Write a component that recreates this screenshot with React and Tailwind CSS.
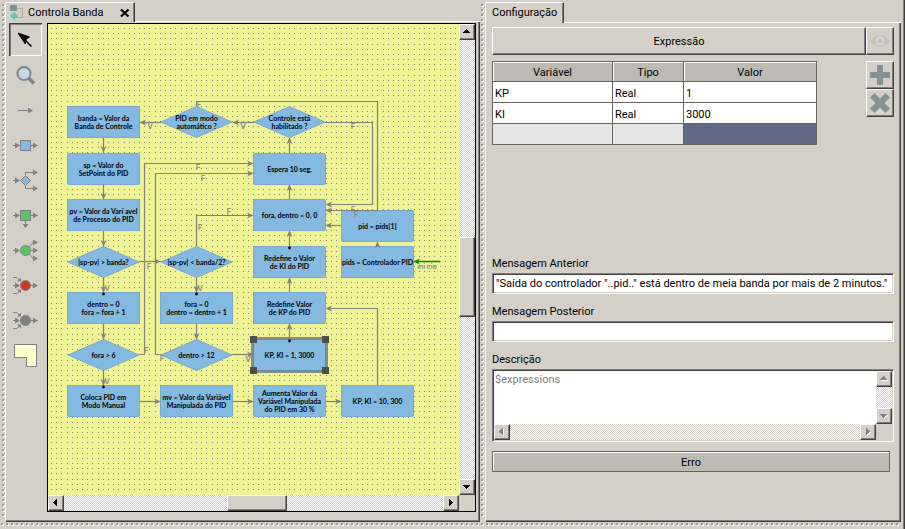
import React from "react";

const ORIGIN_X = 48;
const ORIGIN_Y = 24;

const NODES = [
  { x: 67, y: 106, lines: ["banda = Valor da", "Banda de Controle"] },
  { x: 160, y: 106, diamond: true, lines: ["PID em modo", "automático ?"] },
  { x: 253, y: 106, diamond: true, lines: ["Controle está", "habilitado ?"] },
  { x: 67, y: 153, lines: ["sp = Valor do", "SetPoint do PID"] },
  { x: 253, y: 153, lines: ["Espera 10 seg."] },
  { x: 67, y: 199, lines: ["pv = Valor da Varí avel", "de Processo do PID"] },
  { x: 253, y: 199, lines: ["fora, dentro = 0, 0"] },
  { x: 341, y: 210, lines: ["pid = pids[1]"] },
  { x: 67, y: 246, diamond: true, lines: ["|sp-pv| > banda?"] },
  { x: 160, y: 246, diamond: true, lines: ["|sp-pv| < banda/2?"] },
  { x: 253, y: 246, lines: ["Redefine o Valor", "de KI do PID"] },
  { x: 341, y: 246, lines: ["pids = Controlador PID"] },
  { x: 67, y: 292, lines: ["dentro = 0", "fora = fora + 1"] },
  { x: 160, y: 292, lines: ["fora = 0", "dentro = dentro + 1"] },
  { x: 253, y: 292, lines: ["Redefine Valor", "de KP do PID"] },
  { x: 67, y: 339, diamond: true, lines: ["fora > 6"] },
  { x: 160, y: 339, diamond: true, lines: ["dentro > 12"] },
  { x: 253, y: 339, selected: true, lines: ["KP, KI = 1, 3000"] },
  { x: 67, y: 385, lines: ["Coloca PID em", "Modo Manual"] },
  { x: 160, y: 385, lines: ["mv = Valor da Variável", "Manipulada do PID"] },
  { x: 253, y: 385, lines: ["Aumenta Valor da", "Variável Manipulada", "do PID em 30 %"] },
  { x: 341, y: 385, lines: ["KP, KI = 10, 300"] },
];

const EDGES = [
  "M103.5 138V152", "M103.5 185V199", "M103.5 231V246", "M103.5 278V292", "M103.5 324V339", "M103.5 370V385",
  "M196.5 278V292", "M196.5 324V339",
  "M140 401.5H160", "M233 401.5H253", "M326 401.5H341",
  "M377.5 385V308.5H326",
  "M289.5 339V324", "M289.5 292V278", "M289.5 246V231", "M289.5 199V185", "M289.5 153V138",
  "M254 122.5H233", "M161 122.5H140",
  "M196.5 106V101.5H377.5V210.5H326",
  "M325 122.5H372.5V204.5H326",
  "M139 261.5H160",
  "M196.5 246V215.5H253",
  "M139 354.5H144.5V163.5H253",
  "M161 354.5H155.5V173.5H253",
  "M233 354.5H253",
  "M341 225.5H326",
  "M377.5 246V242",
];

const EDGE_LABELS = [
  ["F", 199, 107], ["V", 150, 129], ["V", 243, 129], ["F", 353, 129],
  ["F", 198, 170], ["F", 203, 181], ["F", 353, 212], ["F", 356, 217],
  ["F", 229, 214], ["F", 200, 230], ["F", 149, 269], ["V", 107, 291],
  ["V", 200, 291], ["F", 146, 353], ["F", 162, 361], ["V", 248, 362], ["V", 107, 384],
];

const PORTS = [[103.5, 294], [196.5, 294], [289.5, 248], [289.5, 341], [103.5, 387]];

const GRID_STEP = 5.18;
const GRID_PATH = (() => {
  let d = "";
  for (let r = 0; r < 90; r++) {
    for (let c = 0; c < 79; c++) {
      d += `M${Math.round(51 + c * GRID_STEP)} ${Math.round(28 + r * GRID_STEP)}h1v1h-1z`;
    }
  }
  return d;
})();

const raised =
  "border border-t-white border-l-white border-r-[#404040] border-b-[#404040] shadow-[inset_-1px_-1px_0_#808080] bg-[#d4d0c8]";
const sunken =
  "border border-t-[#808080] border-l-[#808080] border-r-white border-b-white shadow-[inset_1px_1px_0_#404040,inset_-1px_-1px_0_#d4d0c8] bg-white";
const trough =
  "bg-[repeating-conic-gradient(#ffffff_0_25%,#d4d0c8_0_50%)] bg-[length:2px_2px]";
const gripDots =
  "bg-[conic-gradient(from_270deg_at_2px_2px,#999999_90deg,transparent_0),conic-gradient(from_270deg_at_2px_2px,#ffffff_90deg,transparent_0)] bg-[length:5px_5px] bg-[position:0_0,1px_1px]";

const TRIANGLES = {
  up: "M4 9h7v-1h-1v-1h-1v-1h-1v-1h-1v1h-1v1h-1v1h-1z",
  down: "M4 6h7v1h-1v1h-1v1h-1v1h-1v-1h-1v-1h-1v-1h-1z",
  left: "M9 4v7h-1v-1h-1v-1h-1v-1h-1v-1h1v-1h1v-1h1v-1z",
  right: "M6 4v7h1v-1h1v-1h1v-1h1v-1h-1v-1h-1v-1h-1v-1z",
};

function ScrollButton({ dir, label, disabled }) {
  return (
    <button type="button" aria-label={label} disabled={disabled} className={`size-4 shrink-0 ${raised}`}>
      <svg viewBox="0 0 14 14" className="size-3.5" shapeRendering="crispEdges">
        {disabled && <path d={TRIANGLES[dir]} fill="#fff" />}
        <path d={TRIANGLES[dir]} fill={disabled ? "#808080" : "#000"} transform="translate(-1 -1)" />
      </svg>
    </button>
  );
}

function Node({ node }) {
  return (
    <div
      className="absolute flex h-8 w-[73px] items-center justify-center"
      style={{ left: node.x - ORIGIN_X, top: node.y - ORIGIN_Y }}
    >
      {node.diamond ? (
        <svg viewBox="0 0 73 32" className="absolute inset-0 size-full">
          <path d="M1 16L36.5 0.5L72 16L36.5 31.5Z" fill="#84b9e2" stroke="#79a9cc" />
        </svg>
      ) : (
        <div
          className={`absolute inset-0 rounded-xs bg-[#84b9e2] ${
            node.selected ? "outline-3 -outline-offset-1 outline-[#67788a]/80" : "border border-[#79a9cc]"
          }`}
        />
      )}
      {node.selected && (
        <div className="absolute -inset-[3px] grid grid-cols-2 content-between justify-between">
          <i className="size-[7px] bg-[#4c5049]" />
          <i className="size-[7px] justify-self-end bg-[#4c5049]" />
          <i className="size-[7px] bg-[#4c5049]" />
          <i className="size-[7px] justify-self-end bg-[#4c5049]" />
        </div>
      )}
      <div className="relative text-center font-[Lato,sans-serif] text-[7px] leading-[8px] font-bold whitespace-nowrap text-black">
        {node.lines.map((line) => (
          <div key={line}>{line}</div>
        ))}
      </div>
    </div>
  );
}

function Diagram() {
  return (
    <div className="relative min-h-0 min-w-0 overflow-hidden bg-[#eff295]">
      <svg viewBox="48 24 411 470" className="absolute top-0 left-0 h-[470px] w-[411px]">
        <path d={GRID_PATH} fill="#8c8c6c" shapeRendering="crispEdges" />
      </svg>
      {NODES.map((n) => (
        <Node key={`${n.x}-${n.y}`} node={n} />
      ))}
      <svg viewBox="48 24 411 470" className="pointer-events-none absolute top-0 left-0 h-[470px] w-[411px]">
        <defs>
          <marker id="head" markerUnits="userSpaceOnUse" markerWidth="7" markerHeight="7" refX="6" refY="3.5" orient="auto">
            <path d="M0 0.5L6.5 3.5L0 6.5L1.8 3.5Z" fill="#85817a" />
          </marker>
          <marker id="startHead" markerUnits="userSpaceOnUse" markerWidth="7" markerHeight="7" refX="6" refY="3.5" orient="auto">
            <path d="M0 0.5L6.5 3.5L0 6.5L1.8 3.5Z" fill="#0c8a0c" />
          </marker>
        </defs>
        {EDGES.map((d) => (
          <path key={d} d={d} fill="none" stroke="#85817a" strokeWidth="1.2" markerEnd="url(#head)" />
        ))}
        <path d="M440 261.5H414" stroke="#0c8a0c" strokeWidth="1.5" markerEnd="url(#startHead)" />
        {PORTS.map(([x, y]) => (
          <circle key={`${x}-${y}`} cx={x} cy={y} r="1.4" fill="#000" />
        ))}
        <g className="fill-[#85817a] font-[Inter,sans-serif] text-[8px] font-medium" textAnchor="middle">
          {EDGE_LABELS.map(([t, x, y]) => (
            <text key={`${x}-${y}`} x={x} y={y}>{t}</text>
          ))}
          <text x="427" y="269" className="text-[7px]">iní cio</text>
        </g>
      </svg>
    </div>
  );
}

const G = "#808080";
const arrow = (x, y) => `M${x - 4} ${y - 3}L${x + 1} ${y}L${x - 4} ${y + 3}Z`;

const TOOLS = [
  {
    label: "Selecionar",
    icon: (
      <>
        <path d="M9 9L20.5 13L17.3 15L16.3 20Z" fill="#000" stroke="#000" />
        <path d="M15 15L22.5 22.5" stroke="#000" strokeWidth="1.5" />
      </>
    ),
  },
  {
    label: "Zoom",
    icon: (
      <>
        <path d="M19.5 19L25 24.5" stroke="#7b8790" strokeWidth="3.6" />
        <circle cx="15" cy="14.5" r="6.5" fill="#ccd5de" stroke="#7b8790" strokeWidth="2" />
      </>
    ),
  },
  { label: "Conexão", icon: <><path d="M9 16.5H22" stroke={G} /><path d={arrow(23, 16.5)} fill={G} /></> },
  {
    label: "Ação",
    icon: (
      <>
        <path d="M4 16.5H10M21 16.5H27" stroke={G} />
        <path d={`${arrow(10, 16.5)}${arrow(28, 16.5)}`} fill={G} />
        <rect x="11.5" y="11.5" width="10" height="10" fill="#84b9e2" stroke={G} />
      </>
    ),
  },
  {
    label: "Decisão",
    icon: (
      <>
        <path d="M4 16.5H10M16.5 11V8.5H27M16.5 22V24.5H27" stroke={G} fill="none" />
        <path d={`${arrow(10, 16.5)}${arrow(28, 8.5)}${arrow(28, 24.5)}`} fill={G} />
        <path d="M11.5 16.5L16.5 11.5L21.5 16.5L16.5 21.5Z" fill="#84b9e2" stroke={G} />
      </>
    ),
  },
  {
    label: "Processo",
    icon: (
      <>
        <path d="M4 16.5H10M21 16.5H27M16.5 22V27" stroke={G} />
        <path d={`${arrow(10, 16.5)}${arrow(28, 16.5)}M13.5 25H19.5L16.5 29Z`} fill={G} />
        <rect x="11.5" y="11.5" width="10" height="10" fill="#56c667" stroke={G} />
      </>
    ),
  },
  {
    label: "Bifurcação",
    icon: (
      <>
        <path d="M4 16.5H10M21 16.5H27M20 13L24 8.5H27M20 20L24 24.5H27" stroke={G} fill="none" />
        <path d={`${arrow(10, 16.5)}${arrow(28, 16.5)}${arrow(28, 8.5)}${arrow(28, 24.5)}`} fill={G} />
        <circle cx="16.5" cy="16.5" r="5" fill="#56c667" stroke={G} />
      </>
    ),
  },
  ...[["Junção", "#d03a24"], ["Fim", "#808080"]].map(([label, color]) => ({
    label,
    icon: (
      <>
        <path d="M4 16.5H10M21 16.5H27M4 8.5H8L11 12M4 24.5H8L11 21" stroke={G} fill="none" />
        <path d={`${arrow(10, 16.5)}${arrow(28, 16.5)}M12 8.5V12.5H8ZM12 24.5V20.5H8Z`} fill={G} />
        <circle cx="16.5" cy="16.5" r="5" fill={color} stroke={G} />
      </>
    ),
  })),
  { label: "Nota", icon: <path d="M5.5 5.5H27.5V27.5H17.5V18.5H5.5Z" fill="#ffffcc" stroke={G} /> },
];

function Toolbar() {
  return (
    <nav aria-label="Ferramentas" className="flex w-[41px] shrink-0 flex-col gap-[3px] pt-px pl-[3px]">
      {TOOLS.map((tool, i) => (
        <button
          key={tool.label}
          type="button"
          aria-label={tool.label}
          className={`shrink-0 ${
            i === 0
              ? "size-[33px] shadow-[inset_1px_1px_0_#404040,inset_2px_2px_0_#808080,inset_-1px_-1px_0_#ffffff]"
              : "size-8"
          }`}
        >
          <svg viewBox="0 0 32 32" className="size-8" fill="none">{tool.icon}</svg>
        </button>
      ))}
    </nav>
  );
}

function TabHeader({ children, className }) {
  return (
    <div className={`flex ${className}`}>
      <div className="flex items-center rounded-tl-xs border-t border-r border-l border-white border-r-[#404040] shadow-[inset_-1px_0_0_#808080]">
        {children}
      </div>
      <div className="flex-1 border-b border-white" />
    </div>
  );
}

const panelEdge =
  "border-r border-b border-l border-l-white border-r-[#404040] border-b-[#404040] shadow-[inset_-1px_-1px_0_#808080]";

function EditorPanel() {
  return (
    <section className="flex min-h-0 min-w-0 flex-col">
      <TabHeader className="h-5 shrink-0">
        <div className="flex items-center pr-[2px] pl-[4px]">
          <svg viewBox="0 0 16 16" className="size-4" fill="none">
            <path d="M6.5 3.5H12.5V12.5H5.5" stroke="#a9a9a5" />
            <rect x="0" y="0" width="7" height="6" fill="#7f918f" />
            <path d="M4 7L8 11L4 15L0 11Z" fill="#5bc8b8" />
          </svg>
          <span className="ml-[2px] pt-[2px]">Controla Banda</span>
          <button type="button" aria-label="Fechar" className="ml-[14px] p-[2px]">
            <svg viewBox="0 0 10 10" className="size-2.5">
              <path d="M1 1.5L8.5 8.5M8.5 1.5L1 8.5" stroke="#000" strokeWidth="2.2" />
            </svg>
          </button>
        </div>
      </TabHeader>
      <div className={`flex min-h-0 flex-1 pr-[2px] pb-[9px] ${panelEdge}`}>
        <Toolbar />
        <div className="mt-px mr-px grid min-w-0 flex-1 grid-cols-[minmax(0,1fr)_16px] grid-rows-[minmax(0,1fr)_16px] border border-black">
          <Diagram />
          <div className={`flex flex-col ${trough}`}>
            <ScrollButton dir="up" label="Rolar para cima" />
            <div className="flex-[197]" />
            <div className={`flex-[77] ${raised}`} />
            <div className="flex-[162]" />
            <ScrollButton dir="down" label="Rolar para baixo" />
          </div>
          <div className={`flex ${trough}`}>
            <ScrollButton dir="left" label="Rolar para a esquerda" />
            <div className="flex-[163]" />
            <div className={`flex-[58] ${raised}`} />
            <div className="flex-[156]" />
            <ScrollButton dir="right" label="Rolar para a direita" />
          </div>
          <div />
        </div>
      </div>
    </section>
  );
}

const ROWS = [
  ["KP", "Real", "1"],
  ["KI", "Real", "3000"],
];

function VariableTable() {
  const head =
    "h-5 border border-[#66665f] bg-[#bdbab3] px-0 pt-[3px] pb-0 text-center font-normal shadow-[inset_1px_1px_0_#ffffff]";
  const cell = "h-[21px] border border-[#66665f] bg-white pt-[3px] pr-0 pb-0 pl-[2px]";
  return (
    <table className="w-[325px] table-fixed border-collapse leading-4">
      <colgroup>
        <col className="w-[120px]" />
        <col className="w-[71px]" />
        <col />
      </colgroup>
      <thead>
        <tr>
          <th className={head}>Variável</th>
          <th className={head}>Tipo</th>
          <th className={head}>Valor</th>
        </tr>
      </thead>
      <tbody>
        {ROWS.map(([name, type, value]) => (
          <tr key={name}>
            <td className={cell}>{name}</td>
            <td className={cell}>{type}</td>
            <td className={cell}>{value}</td>
          </tr>
        ))}
        <tr>
          <td className="h-[21px] border border-[#66665f] bg-[#e6e6e6] p-0" />
          <td className="h-[21px] border border-[#66665f] bg-[#e6e6e6] p-0" />
          <td className="h-[21px] border border-[#66665f] bg-[#606a87] p-0" />
        </tr>
      </tbody>
    </table>
  );
}

function ConfigPanel() {
  return (
    <section className="flex min-h-0 min-w-0 flex-col">
      <TabHeader className="h-[21px] shrink-0">
        <span className="pr-[6px] pl-[6px]">Configuração</span>
      </TabHeader>
      <div className={`flex min-h-0 flex-1 flex-col px-[6px] pt-1 ${panelEdge}`}>
        <div className="flex h-7">
          <button type="button" className={`flex-1 pt-[2px] ${raised}`}>Expressão</button>
          <button type="button" aria-label="Visualizar" className={`flex w-7 items-center justify-center ${raised}`}>
            <svg viewBox="0 0 20 12" className="h-3 w-5">
              <path d="M0 6C5 -1 15 -1 20 6C15 13 5 13 0 6Z" fill="#c3c3bf" />
              <circle cx="10" cy="6" r="4.2" fill="#dcdad5" />
              <circle cx="10" cy="6" r="2.6" fill="#c3c3bf" />
            </svg>
          </button>
        </div>
        <div className="mt-1.5 flex h-[194px] items-start justify-between">
          <VariableTable />
          <div className="flex flex-col">
            <button type="button" aria-label="Adicionar" className={`flex size-7 items-center justify-center ${raised}`}>
              <svg viewBox="0 0 20 20" className="size-5">
                <path d="M7 0h6v7h7v6h-7v7h-6v-7h-7v-6h7z" fill="#839391" />
              </svg>
            </button>
            <button type="button" aria-label="Remover" className={`flex size-7 items-center justify-center ${raised}`}>
              <svg viewBox="0 0 20 20" className="size-5">
                <path d="M4.5 0L10 5.5L15.5 0L20 4.5L14.5 10L20 15.5L15.5 20L10 14.5L4.5 20L0 15.5L5.5 10L0 4.5Z" fill="#839391" />
              </svg>
            </button>
          </div>
        </div>
        <label htmlFor="before" className="block h-[18px] leading-[18px]">Mensagem Anterior</label>
        <input
          id="before"
          className={`h-[21px] w-full shrink-0 px-[3px] outline-none ${sunken}`}
          defaultValue={'"Saída do controlador "..pid.." está dentro de meia banda por mais de 2 minutos."'}
        />
        <label htmlFor="after" className="mt-[9px] block h-[18px] leading-[18px]">Mensagem Posterior</label>
        <input id="after" className={`h-[21px] w-full shrink-0 px-[3px] outline-none ${sunken}`} />
        <label htmlFor="description" className="mt-[9px] block h-[18px] leading-[18px]">Descrição</label>
        <div className={`grid h-[73px] shrink-0 grid-cols-[1fr_16px] grid-rows-[1fr_16px] p-px ${sunken}`}>
          <textarea
            id="description"
            placeholder="$expressions"
            className="ml-px block size-full resize-none overflow-hidden leading-[18px] outline-none placeholder:text-[#808080]"
          />
          <div className={`flex flex-col justify-between ${trough}`}>
            <ScrollButton dir="up" label="Subir" disabled />
            <ScrollButton dir="down" label="Descer" disabled />
          </div>
          <div className={`flex justify-between ${trough}`}>
            <ScrollButton dir="left" label="Esquerda" disabled />
            <ScrollButton dir="right" label="Direita" disabled />
          </div>
          <div className="bg-[#d4d0c8]" />
        </div>
        <div className="mt-[9px] mr-1 flex h-[21px] shrink-0 items-center justify-center border border-[#66665f] bg-[#bdbab3] pt-[3px] shadow-[inset_1px_1px_0_#ffffff]">
          Erro
        </div>
      </div>
    </section>
  );
}

export default function App() {
  return (
    <main className="flex h-screen flex-col bg-[#d4d0c8] font-[Roboto,sans-serif] text-[11px] text-black">
      <div className="flex min-h-0 flex-1">
        <div className="flex min-h-0 min-w-0 flex-1 flex-col">
          <div className="grid min-h-0 flex-1 grid-cols-[5px_minmax(0,475fr)_5px_minmax(0,416fr)] pt-[2px]">
            <div className={`mt-[2px] mb-1 ml-[2px] w-[3px] ${gripDots}`} />
            <EditorPanel />
            <div className={`mt-[2px] mb-1 ml-px w-[3px] ${gripDots}`} />
            <ConfigPanel />
          </div>
          <div className={`mt-px mb-[3px] ml-px h-[3px] ${gripDots}`} />
        </div>
        <div className="ml-[2px] w-[2px] border-r border-l border-r-[#404040] border-l-[#808080]" />
      </div>
    </main>
  );
}
